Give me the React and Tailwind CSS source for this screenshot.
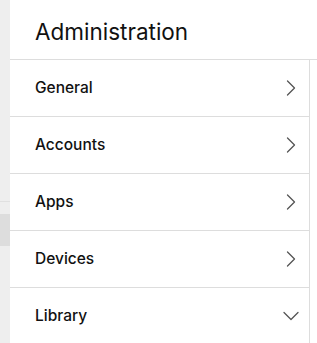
import { ChevronRight, ChevronDown } from 'lucide-react';

const items = [
  { label: 'General' },
  { label: 'Accounts' },
  { label: 'Apps' },
  { label: 'Devices' },
  { label: 'Library', open: true },
];

export default function App() {
  return (
    <div
      className="flex h-[343px] w-[317px] overflow-hidden bg-white text-[#111111]"
      style={{ fontFamily: 'Inter, "Noto Sans", sans-serif' }}
    >
      {/* side rail */}
      <div className="flex w-[10px] shrink-0 flex-col bg-[#eeeeee]">
        <div className="h-[202px] shrink-0 border-b border-[#e0e0e0]" />
        <div className="h-[12px] shrink-0" />
        <div className="h-[32px] shrink-0 bg-[#dddddd]" />
      </div>

      <div className="flex flex-1 flex-col">
        <div className="h-[60px] shrink-0 border-b border-[#dddddd] pl-[25px] pt-[19px]">
          <h1 className="text-[22.5px] font-normal leading-[26px]">Administration</h1>
        </div>

        <div className="flex shrink-0">
          <ul className="w-[300px] border-r border-[#dddddd]">
            {items.map((item) => (
              <li
                key={item.label}
                className="flex h-[57px] items-center justify-between border-b border-[#dddddd] pl-[25px] pr-[4px]"
              >
                <span className="text-[15.5px] font-medium">{item.label}</span>
                {item.open ? (
                  <ChevronDown size={28} strokeWidth={1.1} className="text-[#555555]" />
                ) : (
                  <ChevronRight size={28} strokeWidth={1.1} className="text-[#555555]" />
                )}
              </li>
            ))}
          </ul>
          <div className="flex-1" />
        </div>
      </div>
    </div>
  );
}
